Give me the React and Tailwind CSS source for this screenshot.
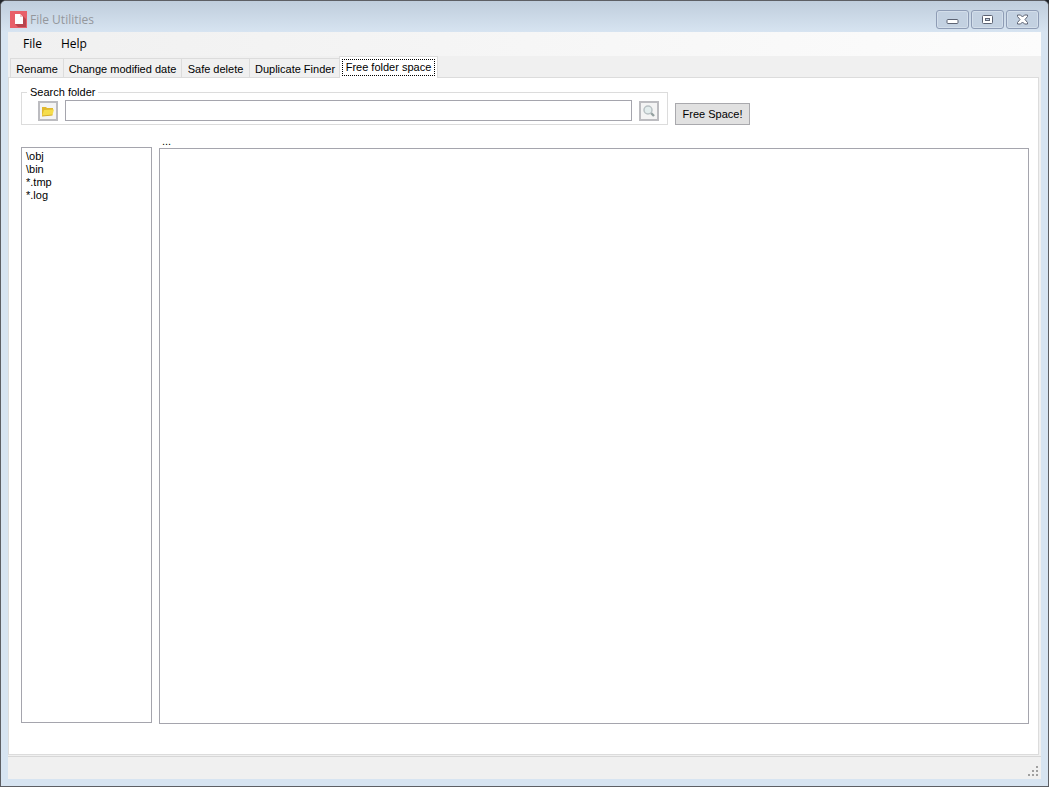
import React, { useState } from "react";

const tabs = [
  { id: "rename", name: "Rename", width: "w-[54px]" },
  { id: "modified", name: "Change modified date", width: "w-[118px]" },
  { id: "delete", name: "Safe delete", width: "w-[68px]" },
  { id: "duplicate", name: "Duplicate Finder", width: "w-[91px]" },
  { id: "space", name: "Free folder space", width: "w-[99px]" },
];

const patterns = ["\\obj", "\\bin", "*.tmp", "*.log"];

function AppIcon() {
  return (
    <svg width="17" height="17" viewBox="0 0 17 17" aria-hidden="true">
      <rect width="17" height="17" fill="#e8606a" />
      <path d="M5 13l3 3h8V8l-3-3z" fill="#b8454f" />
      <path d="M5 3h5l3 3v7H5z" fill="#fff" />
      <path d="M10 3v3h3z" fill="#f3c4c8" />
    </svg>
  );
}

function FolderIcon() {
  return (
    <svg width="14" height="14" viewBox="0 0 14 14" className="shrink-0" aria-hidden="true">
      <path d="M1 12V3h4l1 1h6v3z" fill="#e0b82e" />
      <path d="M1 12l2-6 10-.5-1.500 5.500z" fill="#f5dd4c" />
      <path d="M1 12l10.500-1" stroke="#d6ad2c" fill="none" />
    </svg>
  );
}

function SearchIcon() {
  return (
    <svg width="14" height="14" viewBox="0 0 14 14" className="shrink-0" aria-hidden="true">
      <path d="M8 8l4 4" stroke="#93a09f" strokeWidth="2.4" />
      <circle cx="6" cy="6" r="4" fill="#e3eded" stroke="#b9c1c4" strokeWidth="1.5" />
    </svg>
  );
}

function CaptionButton({ label, children }) {
  return (
    <button
      type="button"
      aria-label={label}
      className="flex h-[19px] w-[33px] items-center justify-center rounded-[3px] border border-[#8e9cb5] bg-[#c3d1e1] shadow-[inset_0_0_0_1px_#d3deea]"
    >
      <svg width="13" height="11" viewBox="0 0 13 11" aria-hidden="true">
        {children}
      </svg>
    </button>
  );
}

function App() {
  const [activeTab, setActiveTab] = useState("space");
  const [folder, setFolder] = useState("");

  return (
    <div className="h-screen bg-[#22262b]">
      <div className="flex h-full flex-col rounded-t-[6px] border border-[#5d5f64] bg-[#d7e4f1] px-[7px] pb-[7px] font-['Liberation_Sans',Arial,sans-serif] text-[11px] leading-[14px] text-black">
        {/* Title bar */}
        <header className="-mx-[7px] flex h-[31px] shrink-0 items-center rounded-t-[5px] bg-linear-to-b from-[#bfcddc] to-[#d7e4f1] px-[9px] pt-[6px]">
          <AppIcon />
          <h1 className="ml-[3px] flex-1 font-['Open_Sans',sans-serif] text-[12px] leading-[16px] text-[#94979c]">
            File Utilities
          </h1>
          <div className="flex gap-[2px]">
            <CaptionButton label="Minimize">
              <rect x="1" y="5.5" width="11" height="4" rx="1" fill="#fff" stroke="#5c6373" />
            </CaptionButton>
            <CaptionButton label="Maximize">
              <rect x="1.5" y="1.5" width="10" height="8" rx="1" fill="#fff" stroke="#5c6373" />
              <rect x="4.5" y="4.5" width="4" height="2" fill="#c3d1e1" stroke="#5c6373" />
            </CaptionButton>
            <CaptionButton label="Close">
              <path
                d="M1.5 1h3l2 2 2-2h3v1.500L9 5.500l2.500 3V10h-3l-2-2-2 2h-3V8.500l2.500-3-2.500-3z"
                fill="#fff"
                stroke="#5c6373"
              />
            </CaptionButton>
          </div>
        </header>

        <nav className="flex h-6 shrink-0 items-center bg-linear-to-r from-[#f0f0f0] to-[#fcfcfc] pl-[15px] font-['Open_Sans',sans-serif] text-[12px]">
          <button type="button" className="w-[38px] text-left">File</button>
          <button type="button">Help</button>
        </nav>

        <main className="flex min-h-0 flex-1 flex-col bg-[#f0f0f0]">
          {/* Tabs */}
          <div role="tablist" className="flex h-[21px] shrink-0 items-end pl-[2px]">
            {tabs.map((tab) => (
              <button
                key={tab.id}
                type="button"
                role="tab"
                aria-selected={activeTab === tab.id}
                onClick={() => setActiveTab(tab.id)}
                className={
                  activeTab === tab.id
                    ? `${tab.width} z-10 -mb-px -ml-[2px] h-[22px] whitespace-nowrap border border-b-0 border-[#dcdcdc] bg-white p-[2px]`
                    : `${tab.width} h-[19px] whitespace-nowrap border border-b-0 border-l-0 border-[#dcdcdc] pt-px first:border-l`
                }
              >
                {activeTab === tab.id ? (
                  <span className="block h-[17px] border border-dotted border-black">{tab.name}</span>
                ) : (
                  tab.name
                )}
              </button>
            ))}
          </div>

          <section className="mr-[2px] flex min-h-0 flex-1 flex-col border border-[#dcdcdc] bg-white pt-[7px] pr-[9px] pb-[30px] pl-[12px]">
            <div className="flex shrink-0">
              <fieldset className="flex min-w-0 flex-1 items-center gap-[7px] border border-[#dcdcdc] pt-px pr-[8px] pb-[3px] pl-[16px]">
                <legend className="-ml-[11px] px-[3px]">Search folder</legend>
                <button
                  type="button"
                  aria-label="Browse"
                  className="flex h-5 w-5 shrink-0 items-center justify-center border-2 border-[#bcbcc0] bg-[#f4f4f4]"
                >
                  <FolderIcon />
                </button>
                <input
                  type="text"
                  aria-label="Search folder"
                  value={folder}
                  onChange={(e) => setFolder(e.target.value)}
                  className="h-[21px] min-w-0 flex-1 border border-[#a5a5ad] bg-white px-1"
                />
                <button
                  type="button"
                  aria-label="Search"
                  className="flex h-5 w-5 shrink-0 items-center justify-center border-2 border-[#bcbcc0] bg-[#f4f4f4]"
                >
                  <SearchIcon />
                </button>
              </fieldset>
              <div className="flex w-[361px] shrink-0 items-end pl-[7px]">
                <button type="button" className="h-[22px] w-[75px] border border-[#a9a9ad] bg-[#e1e1e1]">
                  Free Space!
                </button>
              </div>
            </div>

            {/* Patterns and results */}
            <div className="mt-[9px] flex min-h-0 flex-1 gap-[7px]">
              <select
                multiple
                aria-label="Patterns"
                className="mt-[13px] mb-px w-[131px] shrink-0 overflow-hidden border border-[#a5a5ad] bg-white py-[2px] pl-1"
              >
                {patterns.map((pattern) => (
                  <option key={pattern} className="min-h-0 p-0 pb-px">
                    {pattern}
                  </option>
                ))}
              </select>
              <div className="flex min-w-0 flex-1 flex-col">
                <label htmlFor="results" className="h-[14px] pl-[3px]">
                  ...
                </label>
                <select
                  id="results"
                  multiple
                  className="min-h-0 w-full flex-1 overflow-hidden border border-[#a5a5ad] bg-white"
                />
              </div>
            </div>
          </section>

          <footer className="mt-px flex h-[23px] shrink-0 items-end justify-end border-t border-[#d7d7d7] pr-[2px] pb-[2px]">
            <svg width="12" height="12" viewBox="0 0 12 12" fill="#a0a0a0" aria-hidden="true">
              <path d="M9 1h2v2H9zM5 5h2v2H5zM9 5h2v2H9zM1 9h2v2H1zM5 9h2v2H5zM9 9h2v2H9z" />
            </svg>
          </footer>
        </main>
      </div>
    </div>
  );
}

export default App;
